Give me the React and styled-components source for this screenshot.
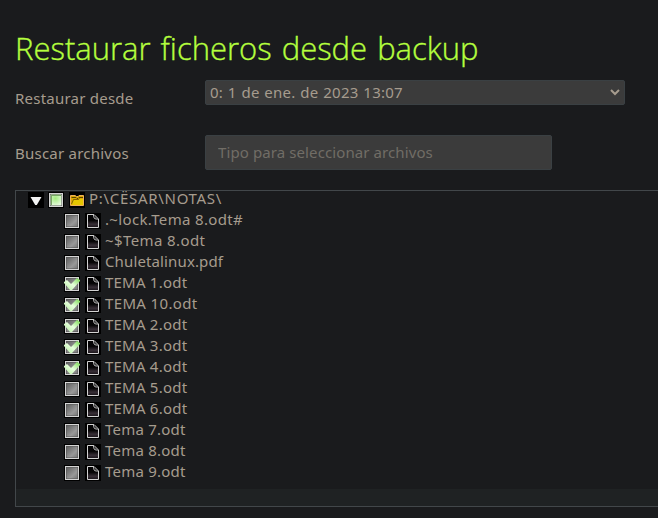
import React from "react";
import styled, { createGlobalStyle } from "styled-components";

const GlobalStyle = createGlobalStyle`
  * { box-sizing: border-box; }
  body {
    margin: 0;
    width: 658px;
    height: 518px;
    overflow: hidden;
    background: #1a1b1d;
    color: #a69c8e;
    font-family: "Noto Sans", "Open Sans", sans-serif;
    font-size: 15px;
  }
`;

const Page = styled.main`
  display: flex;
  flex-direction: column;
  height: 518px;
  padding: 29px 0 0 15px;
`;

const Title = styled.h1`
  margin: 0;
  height: 51px;
  line-height: 38px;
  font-family: "Open Sans", "Noto Sans", sans-serif;
  font-size: 31px;
  font-weight: 300;
  letter-spacing: 0;
  word-spacing: 2px;
  -webkit-text-stroke: 0.35px #b5ff3e;
  color: #b5ff3e;
  white-space: nowrap;
`;

const Field = styled.div`
  display: grid;
  grid-template-columns: 190px 1fr;
  align-items: start;
  height: 55px;
`;

const Label = styled.label`
  padding-top: 8px;
  line-height: 20px;
  letter-spacing: 0.23px;
  white-space: nowrap;
`;

const Select = styled.div`
  display: flex;
  align-items: center;
  justify-content: space-between;
  width: 420px;
  height: 25px;
  padding: 0 4px 0 4px;
  border: 1px solid #3a4043;
  border-radius: 2px;
  background: #3b3b3b;
  line-height: 23px;
  letter-spacing: 0.25px;
  word-spacing: 0.6px;
`;

const SearchInput = styled.input`
  width: 347px;
  height: 35px;
  padding: 0 12px 1px;
  border: 1px solid #3a4043;
  border-radius: 2px;
  outline: none;
  background: #3b3b3b;
  color: #a69c8e;
  font: inherit;
  letter-spacing: 0.1px;
  &::placeholder { color: #716d66; opacity: 1; }
`;

const Tree = styled.div`
  display: flex;
  flex-direction: column;
  height: 317px;
  border: 1px solid #42474a;
  border-right: 0;
`;

const Row = styled.div`
  display: flex;
  height: 21px;
  padding-left: ${(p) => (p.$root ? 12 : 48)}px;
  svg { flex: none; margin: 1px 5px 0 0; }
  svg:first-child { margin-right: ${(p) => (p.$root ? 4 : 5)}px; }
`;

const Name = styled.span`
  margin-left: -1px;
  line-height: 14px;
  letter-spacing: ${(p) => p.$tracking}px;
  white-space: pre;
`;

const Footer = styled.div`
  height: 17px;
  margin-top: auto;
  background: #1f2223;
`;

const Chevron = () => (
  <svg width="10" height="7" viewBox="0 0 10 7">
    <path d="M1 1 L5 5 L9 1" fill="none" stroke="#a69c8e" strokeWidth="2" />
  </svg>
);

const Expander = () => (
  <svg width="16" height="16" viewBox="0 0 16 16">
    <rect width="16" height="16" fill="#000" />
    <path d="M2.5 5H13.5L8.8 13H7.2Z" fill="#f2f2f2" />
  </svg>
);

const Check = ({ state }) => (
  <svg width="16" height="16" viewBox="0 0 16 16">
    <defs>
      <linearGradient id="off" x1="0" y1="0" x2="1" y2="1">
        <stop offset="0" stopColor="#606060" />
        <stop offset=".65" stopColor="#999" />
        <stop offset="1" stopColor="#777" />
      </linearGradient>
      <radialGradient id="partial" cx=".45" cy=".35" r=".7">
        <stop offset="0" stopColor="#a1ec7d" />
        <stop offset="1" stopColor="#e9fbe2" />
      </radialGradient>
      <linearGradient id="tick" x1="0" y1="1" x2="1" y2="0">
        <stop offset="0" stopColor="#b5ee9e" />
        <stop offset=".5" stopColor="#e6ffdc" />
        <stop offset="1" stopColor="#75d84d" />
      </linearGradient>
    </defs>
    <rect width="16" height="16" fill="#000" />
    <rect x="1.5" y="1.5" width="13" height="13" fill="#555" stroke="#d5d5d5" />
    <rect x="2.5" y="2.5" width="11" height="11" fill={state === "partial" ? "url(#partial)" : "url(#off)"} />
    {state === "partial" && <path d="M3 3.5H13M3.5 3V13" fill="none" stroke="#78a765" />}
    {state === "on" && <path d="M0 6L3 4L7 8L13 2L16 4V5L8 14H6L0 7Z" fill="url(#tick)" />}
  </svg>
);

const Folder = () => (
  <svg width="16" height="16" viewBox="0 0 16 16">
    <rect width="16" height="16" fill="#000" />
    <path d="M1.5 13.5V3.5H6L7.5 4.5H9L10 3.5H14.5V13.5Z" fill="#d9a900" stroke="#f0b05a" />
    <path d="M2.5 5.5H7L8 6.5H9L10 5.5H14" fill="none" stroke="#5c4300" />
    <path d="M3 13L4.5 8H9.5L10.5 7H14V13Z" fill="#e6c600" />
    <path d="M2.5 12L4.5 7.5H9.5L10.5 6.5" fill="none" stroke="#715200" strokeWidth=".8" />
  </svg>
);

const Doc = () => (
  <svg width="16" height="16" viewBox="0 0 16 16">
    <defs>
      <linearGradient id="paper" x1="0" y1="0" x2="0" y2="1">
        <stop offset=".45" stopColor="#050405" />
        <stop offset=".75" stopColor="#382f37" />
        <stop offset="1" stopColor="#171217" />
      </linearGradient>
    </defs>
    <rect width="16" height="16" fill="#000" />
    <path d="M2.5 1.5H9L13.5 6V14.5H2.5Z" fill="url(#paper)" stroke="#d2d2d2" />
    <path d="M8.5 1.5V3.5L9.5 5.5L11 6H13" fill="none" stroke="#bbb" />
    <path d="M9.5 3L12 5.5" stroke="#777" />
  </svg>
);

const files = [
  { name: ".~lock.Tema 8.odt#", tracking: 0.35 },
  { name: "~$Tema 8.odt", tracking: 0.4 },
  { name: "Chuletalinux.pdf", tracking: 0.13 },
  { name: "TEMA 1.odt", checked: true },
  { name: "TEMA 10.odt", checked: true, tracking: 0.35 },
  { name: "TEMA 2.odt", checked: true },
  { name: "TEMA 3.odt", checked: true },
  { name: "TEMA 4.odt", checked: true },
  { name: "TEMA 5.odt" },
  { name: "TEMA 6.odt" },
  { name: "Tema 7.odt" },
  { name: "Tema 8.odt" },
  { name: "Tema 9.odt" },
];

export default function App() {
  return (
    <>
      <GlobalStyle />
      <Page>
        <Title>Restaurar ficheros desde backup</Title>
        <Field>
          <Label>Restaurar desde</Label>
          <Select role="combobox">
            <span>0: 1 de ene. de 2023 13:07</span>
            <Chevron />
          </Select>
        </Field>
        <Field>
          <Label htmlFor="search">Buscar archivos</Label>
          <SearchInput id="search" placeholder="Tipo para seleccionar archivos" />
        </Field>
        <Tree>
          <Row $root>
            <Expander />
            <Check state="partial" />
            <Folder />
            <Name $tracking={0.7}>{"P:\\CËSAR\\NOTAS\\"}</Name>
          </Row>
          {files.map(({ name, checked, tracking = 0.22 }) => (
            <Row key={name}>
              <Check state={checked ? "on" : "off"} />
              <Doc />
              <Name $tracking={tracking}>{name}</Name>
            </Row>
          ))}
          <Footer />
        </Tree>
      </Page>
    </>
  );
}
